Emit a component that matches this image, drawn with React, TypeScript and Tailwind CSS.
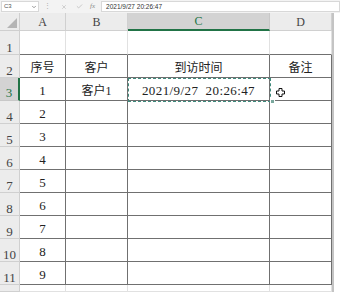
import { ChevronDown, X, Check } from "lucide-react";

const serif = { fontFamily: '"Liberation Serif", "Noto Sans CJK SC", serif' };

const data: Record<number, string[]> = {
  2: ["序号", "客户", "到访时间", "备注"],
  3: ["1", "客户1", "2021/9/27  20:26:47", ""],
};
for (let r = 4; r <= 11; r++) data[r] = [String(r - 2), "", "", ""];

const rows = [1, 2, 3, 4, 5, 6, 7, 8, 9, 10, 11, 12];
const cols = ["A", "B", "C", "D"];

const FormulaBar = () => (
  <div className="flex h-[13px] items-center bg-[#f3f3f3] text-[#555]" style={{ fontFamily: '"Liberation Sans", sans-serif' }}>
    <div className="ml-[1px] flex h-[11px] w-[38px] items-center justify-between border border-[#d8d8d8] bg-white pl-[2px] pr-[1px] text-[6px]">
      <span>C3</span>
      <ChevronDown className="h-[6px] w-[6px] text-[#777]" strokeWidth={3} />
    </div>
    <span className="ml-[5px] text-[7px] text-[#aaa]">⋮</span>
    <X className="ml-[10px] h-[6px] w-[6px] text-[#aaa]" strokeWidth={2} />
    <Check className="ml-[9px] h-[7px] w-[7px] text-[#aaa]" strokeWidth={2} />
    <span className="ml-[7px] text-[7px] italic text-[#888]" style={serif}>fx</span>
    <div className="ml-[6px] flex h-[11px] flex-1 items-center border border-[#d8d8d8] bg-white pl-[4px] text-[6.5px] text-[#333]">
      2021/9/27 20:26:47
    </div>
  </div>
);

const App = () => {
  return (
    <div className="relative h-[292px] w-[340px] overflow-hidden bg-white">
      <FormulaBar />
      <div className="grid grid-cols-[20px_46px_62px_142px_62px_8px] grid-rows-[18px_24px_repeat(10,23px)_7px]" style={serif}>
        {/* corner */}
        <div className="relative border-b border-r border-[#cfcfcf] bg-[#ececec]">
          <div className="absolute bottom-[2px] right-[2px] h-0 w-0 border-b-[10px] border-l-[10px] border-b-[#b5b5b5] border-l-transparent" />
        </div>
        {cols.map((c) =>
          c === "C" ? (
            <div key={c} className="flex items-center justify-center border-b-2 border-r border-b-[#217346] border-r-[#c8c8c8] bg-[#d3d3d3] text-[12px] text-[#217346]">
              {c}
            </div>
          ) : (
            <div key={c} className="flex items-center justify-center border-b border-r border-[#d0d0d0] bg-[#ececec] text-[12px] text-[#444]">
              {c}
            </div>
          )
        )}
        <div className="row-span-13 border-l-2 border-[#c4c4c4] bg-white" />
        {rows.map((r) => {
          const inTable = r >= 2 && r <= 11;
          return [
            r === 3 ? (
              <div key={`h${r}`} className="flex items-end justify-center border-b border-r-2 border-b-[#c8c8c8] border-r-[#217346] bg-[#d3d3d3] pb-[1px] text-[13px] leading-none text-[#217346]">
                {r}
              </div>
            ) : (
              <div key={`h${r}`} className="flex items-start justify-center overflow-hidden border-b border-r border-[#d0d0d0] bg-[#ececec] text-[13px] leading-none text-[#444]">
                <span className={r === 12 ? "mt-[4px]" : r === 1 ? "mt-[10px]" : "mt-[9px]"}>{r}</span>
              </div>
            ),
            ...cols.map((c, i) => {
              const text = data[r]?.[i] ?? "";
              const cjk = /[\u4e00-\u9fff]/.test(text);
              const bottomDark = r >= 1 && r <= 11;
              const cls = inTable
                ? "border-b border-r border-[#707070]"
                : bottomDark
                  ? "border-b border-r border-b-[#707070] border-r-[#e1e1e1]"
                  : "border-b border-r border-[#e1e1e1]";
              return (
                <div key={`${r}${c}`} className={`flex items-end justify-center pb-[3px] leading-none text-[#222] ${cjk ? "text-[12px]" : "text-[13px]"} ${cls}`}>
                  <span className={c === "C" && r === 3 ? "whitespace-pre tracking-[0.4px]" : "whitespace-pre"}>{text}</span>
                </div>
              );
            }),
          ];
        })}
      </div>
      {/* selected cell C3 */}
      <div className="pointer-events-none absolute left-[128px] top-[78px] h-[24px] w-[143px] border border-dashed border-[#3f8a7c]" />
      {/* fill handle */}
      <div className="absolute left-[270px] top-[99px] h-[5px] w-[5px] border border-white bg-[#7aa89e]" />
      {/* cursor */}
      <svg className="absolute left-[276px] top-[88px]" width="9" height="9" viewBox="0 0 9 9">
        <path d="M3 0.5h3v2.5h2.5v3H6v2.5H3V6H0.5V3H3z" fill="#fff" stroke="#111" strokeWidth="1" />
      </svg>
    </div>
  );
};

export default App;
